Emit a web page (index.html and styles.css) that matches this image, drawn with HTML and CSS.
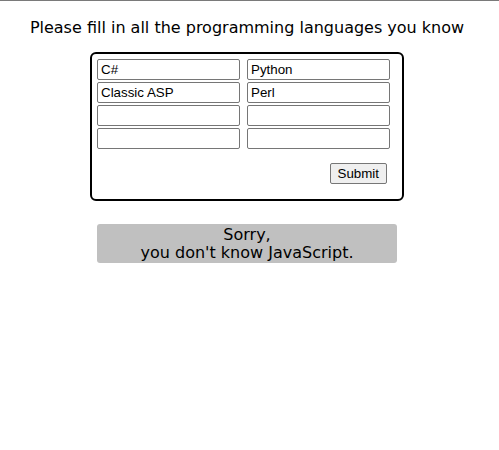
FILE: index.html
```html
<!DOCTYPE html>
<html>
<head>
<meta charset="utf-8">
<link rel="stylesheet" href="styles.css">
</head>
<body>
<div class="page">
  <p class="prompt">Please fill in all the programming languages you know</p>
  <form class="langs">
    <div class="grid">
      <input type="text" value="C#">
      <input type="text" value="Python">
      <input type="text" value="Classic ASP">
      <input type="text" value="Perl">
      <input type="text" value="">
      <input type="text" value="">
      <input type="text" value="">
      <input type="text" value="">
    </div>
    <div class="actions"><button type="button">Submit</button></div>
  </form>
  <div class="sorry">Sorry,<br>you don't know JavaScript.</div>
</div>
</body>
</html>
```
FILE: styles.css
```css
html { border-top: 1px solid #7a7a7a; }
body { margin: 0; background: #fff; font-family: "DejaVu Sans", Verdana, sans-serif; color: #000; }
.page { width: 494px; display: flex; flex-direction: column; align-items: center; }
.prompt { margin: 17px 0 0; font-size: 16px; line-height: 19px; }
.langs { margin-top: 15px; width: 314px; box-sizing: border-box; border: 2px solid #000; border-radius: 6px; padding: 5px 12px 15px 5px; }
.grid { display: grid; grid-template-columns: 143px 143px; column-gap: 7px; row-gap: 2px; }
.grid input { box-sizing: border-box; width: 143px; height: 21px; margin: 0; padding: 1px 3px; border: 1px solid #767676; border-radius: 2px; font-family: "Liberation Sans", Arial, sans-serif; font-size: 13.33px; }
.actions { display: flex; justify-content: flex-end; margin-top: 14px; padding-right: 3px; }
.actions button { height: 21px; margin: 0; padding: 1px 7px; border: 1px solid #767676; border-radius: 2px; background: #efefef; font-family: "Liberation Sans", Arial, sans-serif; font-size: 13.33px; }
.sorry { margin-top: 23px; width: 300px; background: #c0c0c0; border-radius: 3px; text-align: center; font-size: 16px; line-height: 18px; padding: 2px 0 1px; }
```
